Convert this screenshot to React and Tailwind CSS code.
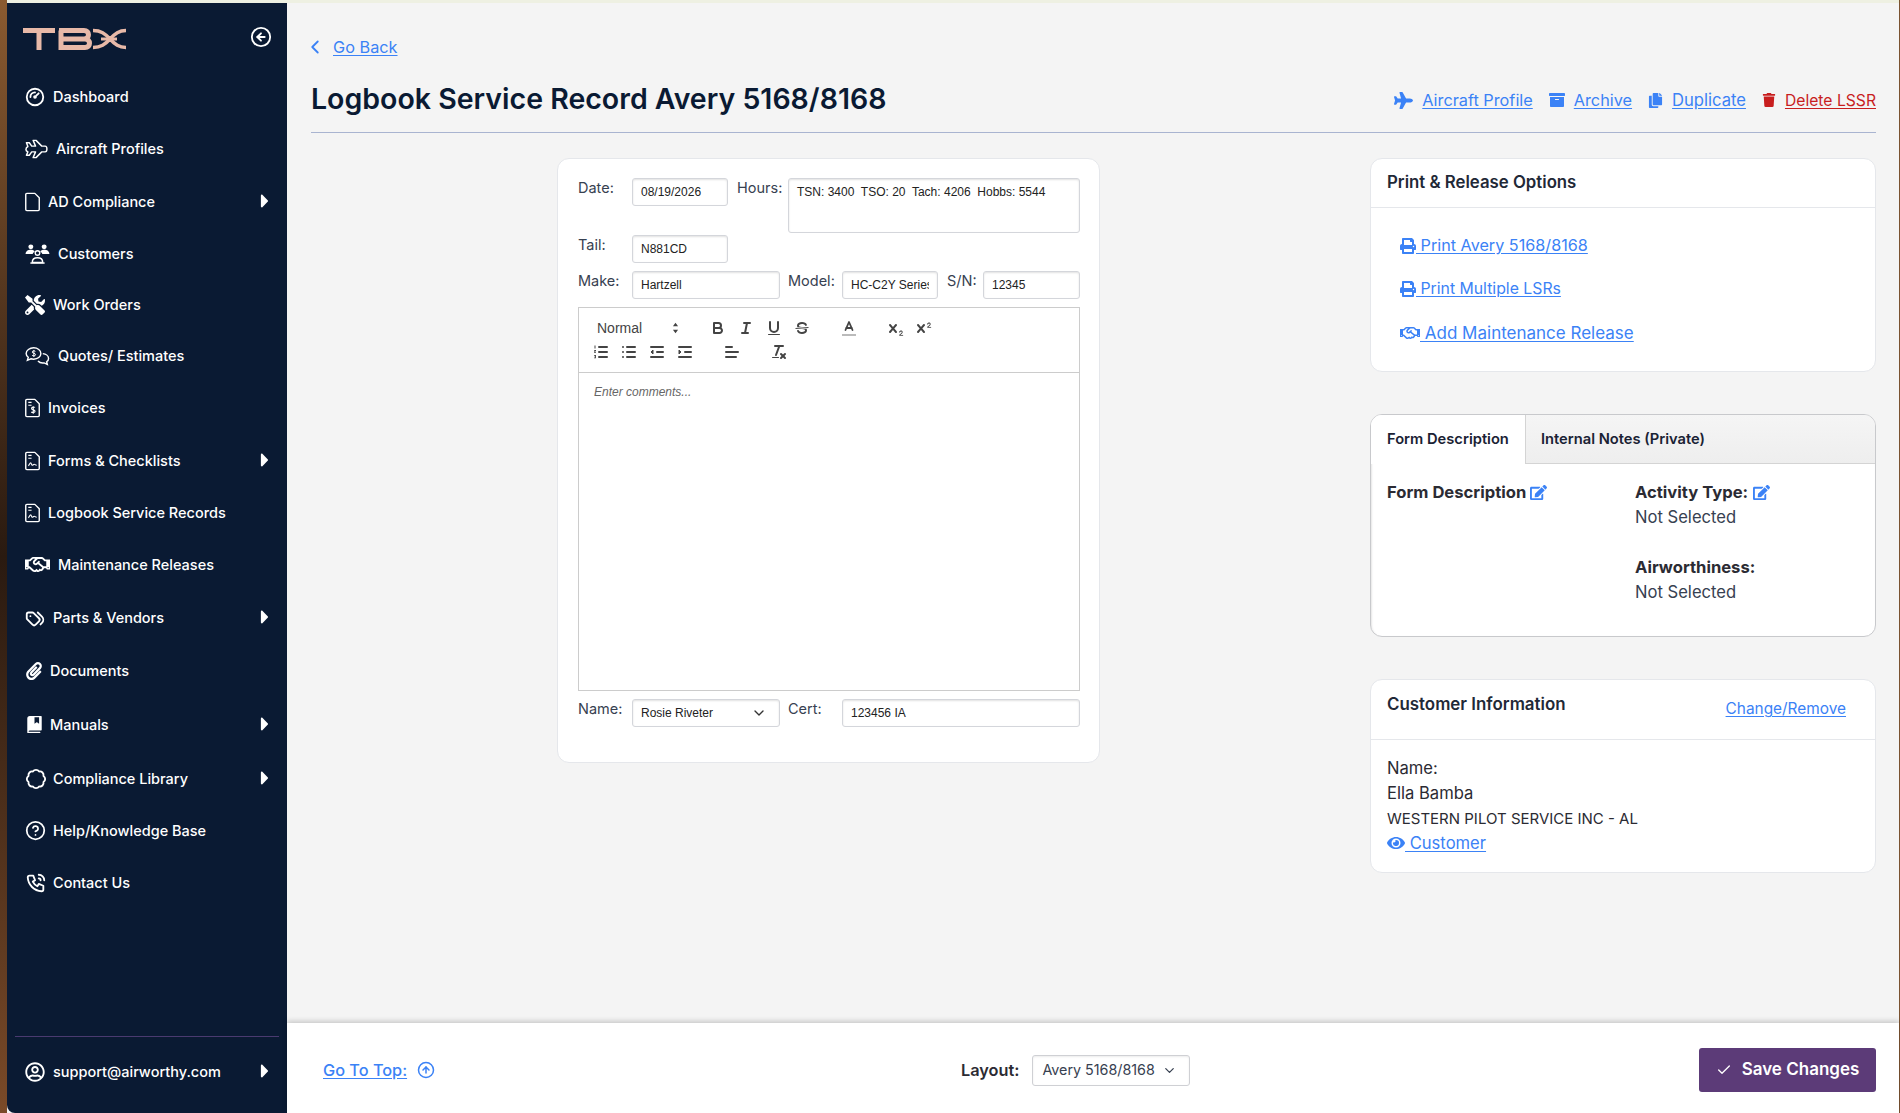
import { FaArchive, FaCaretRight, FaEye, FaPlane, FaPrint, FaRegHandshake, FaRegUserCircle, FaTools, FaTrash, FaCopy, FaEdit, FaPaperclip } from "react-icons/fa";
import { PiBookBookmarkFill } from "react-icons/pi";
import { TbGauge, TbTags, TbPhoneCall } from "react-icons/tb";
import { LuBadge, LuCheck, LuChevronDown, LuChevronLeft, LuCircleArrowLeft, LuCircleArrowUp, LuCircleHelp } from "react-icons/lu";

const poppins = "font-['Inter',sans-serif]";
const arial = "font-['Liberation_Sans',Arial,sans-serif]";

function QuotesIcon() {
  return (
    <svg viewBox="0 0 26 20" className="w-[25px] h-[20px]" fill="none" stroke="currentColor" strokeWidth="1.5">
      <path d="M9 1.5c4.2 0 7.5 2.6 7.5 5.9s-3.300 5.900-7.500 5.900c-1 0-1.900-.1-2.800-.4L2.500 14.500l.9-3.200C2 10.300 1.200 8.900 1.200 7.400 1.200 4.100 4.800 1.500 9 1.500z" />
      <path d="M18.500 7.500c3.300.4 6 2.500 6 5 0 1.400-.7 2.600-2 3.500l.7 2.700-3.200-1.500c-2.500.4-5-.2-6.500-1.900" />
      <path d="M10.800 5.200c-.4-.7-3.300-1-3.300.7 0 1.700 3.500.9 3.500 2.700 0 1.600-3 1.500-3.700.6M9.200 3.800v7.200" strokeWidth="1" />
    </svg>
  );
}

function PlaneIcon() {
  return (
    <svg viewBox="0 0 24 20" className="w-[23px] h-[20px]" fill="none" stroke="currentColor" strokeWidth="1.500" strokeLinejoin="round">
      <path d="M1.500 3.500h3l2.500 3.500h4L8.500 1h3l6 6h3.500c2.500 0 2.500 6 0 6h-3.500l-6 6h-3l2.500-6h-4l-2.500 3.500h-3l1.500-3.500-1.500-1-.5-1.500.5-2 1.500-1z" />
    </svg>
  );
}

function UsersIcon() {
  return (
    <svg viewBox="0 0 26 21" className="w-[25px] h-[20px]">
      <g fill="currentColor">
        <circle cx="6" cy="3" r="2.600" />
        <circle cx="20" cy="3" r="2.600" />
        <path d="M0.500 10.500c0-3 2.500-4.500 5.500-4.500 2 0 3.400.6 4.200 1.700-1.300 1-2 2-2.200 2.800z" />
        <path d="M25.500 10.500c0-3-2.500-4.500-5.500-4.500-2 0-3.400.6-4.200 1.700 1.300 1 2 2 2.200 2.800z" />
      </g>
      <g fill="none" stroke="currentColor" strokeWidth="1.500">
        <circle cx="13" cy="9.500" r="2.400" />
        <path d="M7.500 19.500c0-3.500 2.500-5 5.500-5s5.500 1.500 5.500 5z" />
      </g>
      <path d="M5.500 20h15" stroke="currentColor" strokeWidth="1.500" />
    </svg>
  );
}

function FileIcon({ children }) {
  return (
    <svg viewBox="0 0 16 20" className="w-[15px] h-[20px]" fill="none" stroke="currentColor" strokeWidth="1.500" strokeLinejoin="round">
      <path d="M2 .8h8.500l4.700 4.700V18a1.200 1.200 0 0 1-1.200 1.200H2A1.200 1.200 0 0 1 .8 18V2A1.200 1.200 0 0 1 2 .8z" />
      {children}
    </svg>
  );
}

function InvoiceIcon() {
  return (
    <FileIcon>
      <path d="M3.500 4h3.500M3.500 7h3.500" strokeWidth="1.200" />
      <path d="M10.500 9.500c-.5-.7-3.500-.8-3.500 1 0 1.900 3.700 1 3.700 3 0 1.800-3.300 1.600-4 .6M8.800 8v8" strokeWidth="1.200" />
    </FileIcon>
  );
}

function FormIcon() {
  return (
    <FileIcon>
      <path d="M3.500 4h3.500M3.500 7h3.500" strokeWidth="1.200" />
      <path d="M3.500 15c1-.3 1.500-3 2.500-3s.8 2.500 1.800 2.500 1-1 2-1 1 1 2.700 1" strokeWidth="1.200" />
    </FileIcon>
  );
}

function SideItem({ icon, label, pad, height, caret }) {
  return (
    <div className={`flex items-center pl-[18px] pr-[18px] text-white ${height}`}>
      <div className={`flex items-center shrink-0 ${pad}`}>{icon}</div>
      <span className="text-[14.5px] font-medium whitespace-nowrap">{label}</span>
      {caret && <FaCaretRight className="ml-auto text-[22px] -mr-[7px] -mt-[2px]" />}
    </div>
  );
}

function Sidebar() {
  return (
    <aside className={`${poppins} w-[280px] shrink-0 bg-[#0a1a33] rounded-bl-lg flex flex-col`}>
      <div className="flex items-start justify-between pl-[16px] pr-[15px] pt-[25px] h-[68px]">
        <svg viewBox="0 0 105 22" className="w-[105px] h-[22px]" fill="none" stroke="#e8b9a8" strokeWidth="5">
          <path d="M0 2.500h32M16 2.500V22" />
          <path d="M36 2.500h25c6 0 6 8.500 0 8.500H38M38 11h24c6 0 6 8.500 0 8.500H38V2.500" />
          <path d="M70 2.500c8 0 12 3 17 8.500c5-5.500 9-8.500 16-8.500M70 19.500c8 0 12-3 17-8.500c5 5.500 9 8.500 16 8.500" strokeWidth="3.500" />
          <path d="M78 11h16" strokeWidth="3" />
        </svg>
        <LuCircleArrowLeft className="text-white text-[22px] -mt-[2px]" />
      </div>
      <div className="flex flex-col">
        <SideItem height="h-[51px]" pad="w-[28px]" label="Dashboard" icon={<TbGauge className="text-[22px] -ml-[1px]" />} />
        <SideItem height="h-[53px]" pad="w-[31px]" label="Aircraft Profiles" icon={<PlaneIcon />} />
        <SideItem height="h-[53px]" pad="w-[23px]" label="AD Compliance" caret icon={<FileIcon />} />
        <SideItem height="h-[51px]" pad="w-[33px]" label="Customers" icon={<UsersIcon />} />
        <SideItem height="h-[51px]" pad="w-[28px]" label="Work Orders" icon={<FaTools className="text-[20px]" />} />
        <SideItem height="h-[51px]" pad="w-[33px]" label="Quotes/ Estimates" icon={<QuotesIcon />} />
        <SideItem height="h-[53px]" pad="w-[23px]" label="Invoices" icon={<InvoiceIcon />} />
        <SideItem height="h-[53px]" pad="w-[23px]" label="Forms & Checklists" caret icon={<FormIcon />} />
        <SideItem height="h-[51px]" pad="w-[23px]" label="Logbook Service Records" icon={<FormIcon />} />
        <SideItem height="h-[53px]" pad="w-[33px]" label="Maintenance Releases" icon={<FaRegHandshake className="text-[25px]" />} />
        <SideItem height="h-[53px]" pad="w-[28px]" label="Parts & Vendors" caret icon={<TbTags className="text-[22px] -ml-[1px]" />} />
        <SideItem height="h-[53px]" pad="w-[25px]" label="Documents" icon={<FaPaperclip className="text-[18px]" />} />
        <SideItem height="h-[55px]" pad="w-[25px]" label="Manuals" caret icon={<PiBookBookmarkFill className="text-[21px] -ml-[1px]" />} />
        <SideItem height="h-[53px]" pad="w-[28px]" label="Compliance Library" caret icon={<LuBadge className="text-[22px]" />} />
        <SideItem height="h-[51px]" pad="w-[28px]" label="Help/Knowledge Base" icon={<LuCircleHelp className="text-[21px]" />} />
        <SideItem height="h-[53px]" pad="w-[28px]" label="Contact Us" icon={<TbPhoneCall className="text-[22px]" />} />
      </div>
      <div className="mt-auto mx-[8px] border-t border-[#4a3a70] pt-[11px] pb-[18px]">
        <div className="-mx-[8px]">
          <SideItem height="h-[47px]" pad="w-[28px]" label="support@airworthy.com" caret icon={<FaRegUserCircle className="text-[20px]" />} />
        </div>
      </div>
    </aside>
  );
}

function Label({ children, className = "" }) {
  return <label className={`${poppins} text-[14.5px] text-[#374151] leading-[20px] whitespace-nowrap ${className}`}>{children}</label>;
}

function Field({ value, className = "" }) {
  return (
    <input
      readOnly
      value={value}
      className={`${arial} h-[28px] px-[8px] text-[12px] text-[#222] bg-white border border-[#d4d6db] rounded-[3px] shadow-[inset_0_1px_2px_rgba(0,0,0,0.12)] outline-none ${className}`}
    />
  );
}

const qs = { fill: "none", stroke: "#444", strokeWidth: 2, strokeLinecap: "round", strokeLinejoin: "round" };

function Qicon({ children }) {
  return (
    <button className="w-[28px] h-[24px] flex items-center justify-center shrink-0">
      <svg viewBox="0 0 18 18" className="w-[18px] h-[18px]">{children}</svg>
    </button>
  );
}

function ListLines({ x = 7 }) {
  return (
    <g {...qs}>
      <line x1={x} x2="15" y1="4" y2="4" />
      <line x1={x} x2="15" y1="9" y2="9" />
      <line x1={x} x2="15" y1="14" y2="14" />
    </g>
  );
}

function Toolbar() {
  const subX = "M9.650,5.241a1,1,0,0,0-1.409.108L6,7.964,3.759,5.349A1,1,0,0,0,2.192,6.592Q2.200,6.600,2.241,6.651L4.684,9.500,2.241,12.350A1,1,0,0,0,3.759,13.651L6,11.036l2.241,2.615a1,1,0,0,0,1.567-1.243Q9.800,12.400,9.759,12.350L7.316,9.500,9.759,6.651A1,1,0,0,0,9.650,5.241Z";
  return (
    <div className="h-[65px] border-b border-[#ccc] pl-[8px] pt-[8px] shrink-0">
      <div className="flex h-[24px] items-start">
        <div className={`${arial} w-[98px] h-[24px] flex items-center justify-between pl-[10px] pr-[6px] text-[14px] text-[#444] mr-[19px]`}>
          <span>Normal</span>
          <svg viewBox="0 0 8 14" className="w-[7px] h-[12px]" fill="#444"><path d="M4 1l3 4H1zM4 13L1 9h6z" /></svg>
        </div>
        <Qicon>
          <g {...qs}>
            <path d="M5,4H9.500A2.500,2.500,0,0,1,12,6.500v0A2.500,2.500,0,0,1,9.500,9H5V4Z" />
            <path d="M5,9h5.500A2.500,2.500,0,0,1,13,11.500v0A2.500,2.500,0,0,1,10.500,14H5V9Z" />
          </g>
        </Qicon>
        <Qicon>
          <g {...qs}>
            <line x1="7" x2="13" y1="4" y2="4" />
            <line x1="5" x2="11" y1="14" y2="14" />
            <line x1="8" x2="10" y1="14" y2="4" />
          </g>
        </Qicon>
        <Qicon>
          <path {...qs} d="M5,3V9a4,4,0,0,0,4,4H9a4,4,0,0,0,4-4V3" />
          <rect fill="#444" height="1" rx=".5" width="12" x="3" y="15" />
        </Qicon>
        <Qicon>
          <line stroke="#444" strokeWidth="1" x1="15.500" x2="2.500" y1="8.500" y2="9.500" />
          <path fill="#444" d="M9,8C6.500,7.800,6,7.500,6,6.500,6,5.800,7.300,5,9,5c1.600,0,2.800.7,3,1.300a1,1,0,0,0,1.900-.6C13.400,4.100,11.400,3,9,3,6.200,3,4,4.500,4,6.500a3.200,3.200,0,0,0,.5,1.800Z" />
          <path fill="#444" d="M9,10C11.500,10.200,12,10.500,12,11.500c0,.7-1.300,1.500-3,1.500-1.600,0-2.800-.7-3-1.300a1,1,0,1,0-1.900.6C4.600,13.900,6.600,15,9,15c2.800,0,5-1.500,5-3.500a3.200,3.200,0,0,0-.5-1.800Z" />
        </Qicon>
        <div className="w-[19px] shrink-0" />
        <Qicon>
          <g {...qs} strokeWidth="1.800">
            <polyline points="5.500 11 9 3 12.500 11" />
            <line x1="11.600" x2="6.400" y1="9" y2="9" />
          </g>
          <rect fill="#bbb" height="2" width="14" x="2" y="15" />
        </Qicon>
        <div className="w-[19px] shrink-0" />
        <Qicon>
          <path fill="#444" d={subX} />
          <path fill="#444" d="M15.500,16H13.400c.6-.6,2.300-1.500,2.300-3,0-.9-.7-1.500-1.600-1.500-.9,0-1.700.6-2,1.400a.5.5,0,1,0,1,.3c.1-.4.500-.7,1-.7.400,0,.7.200.7.500,0,1-1.300,1.800-2.200,2.500-.3.200-.5.500-.5,.8,0,.3.200.4.500.4h3.100a.5.5,0,0,0,0-1Z" />
        </Qicon>
        <Qicon>
          <path fill="#444" d={subX} />
          <path fill="#444" d="M15.500,8H13.400c.6-.6,2.300-1.500,2.300-3,0-.9-.7-1.500-1.600-1.500-.9,0-1.700.6-2,1.400a.5.5,0,1,0,1,.3c.1-.4.500-.7,1-.7.400,0,.7.200.7.500,0,1-1.300,1.800-2.200,2.500-.3.200-.5.500-.5,.8,0,.3.200.4.500.4h3.100a.5.5,0,0,0,0-1Z" />
        </Qicon>
      </div>
      <div className="flex h-[24px] items-start">
        <Qicon>
          <ListLines />
          <path fill="#444" d="M2.500 2.500h1v3h-1zM2 7h2v.8l-1 1.200h1v.8H2V9l1-1.200H2zM2 12h2v3.200H2v-.7h1.200v-.5H2.500v-.6h.7v-.6H2z" />
        </Qicon>
        <Qicon>
          <ListLines />
          <g {...qs}>
            <line x1="3" x2="3" y1="4" y2="4" />
            <line x1="3" x2="3" y1="9" y2="9" />
            <line x1="3" x2="3" y1="14" y2="14" />
          </g>
        </Qicon>
        <Qicon>
          <g {...qs}>
            <line x1="3" x2="15" y1="14" y2="14" />
            <line x1="3" x2="15" y1="4" y2="4" />
            <line x1="9" x2="15" y1="9" y2="9" />
          </g>
          <polyline fill="#444" stroke="#444" points="5 7 5 11 3 9 5 7" />
        </Qicon>
        <Qicon>
          <g {...qs}>
            <line x1="3" x2="15" y1="14" y2="14" />
            <line x1="3" x2="15" y1="4" y2="4" />
            <line x1="9" x2="15" y1="9" y2="9" />
          </g>
          <polyline fill="#444" stroke="#444" points="3 7 3 11 5 9 3 7" />
        </Qicon>
        <div className="w-[19px] shrink-0" />
        <Qicon>
          <g {...qs}>
            <line x1="3" x2="15" y1="9" y2="9" />
            <line x1="3" x2="13" y1="14" y2="14" />
            <line x1="3" x2="9" y1="4" y2="4" />
          </g>
        </Qicon>
        <div className="w-[19px] shrink-0" />
        <Qicon>
          <g {...qs}>
            <line x1="5" x2="13" y1="3" y2="3" />
            <line x1="6" x2="9.350" y1="12" y2="3" />
            <line x1="11" x2="15" y1="11" y2="15" />
            <line x1="15" x2="11" y1="11" y2="15" />
          </g>
          <rect fill="#444" height="1" rx=".5" width="7" x="2" y="14" />
        </Qicon>
      </div>
    </div>
  );
}

function FormCard() {
  return (
    <div className="w-[543px] ml-[246px] h-[605px] bg-white rounded-xl border border-[#e5e7eb] pl-[20px] pr-[19px] pt-[19px]">
      <div className="flex">
        <Label className="w-[54px]">Date:</Label>
        <Field value="08/19/2026" className="w-[96px]" />
        <Label className="w-[51px] ml-[9px]">Hours:</Label>
        <textarea readOnly value="TSN: 3400  TSO: 20  Tach: 4206  Hobbs: 5544" className={`${arial} w-[292px] h-[55px] px-[8px] py-[4px] text-[12px] text-[#222] bg-white border border-[#d4d6db] rounded-[3px] shadow-[inset_0_1px_2px_rgba(0,0,0,0.12)] outline-none resize-none`} />
      </div>
      <div className="flex mt-[2px]">
        <Label className="w-[54px]">Tail:</Label>
        <Field value="N881CD" className="w-[96px]" />
      </div>
      <div className="flex mt-[8px]">
        <Label className="w-[54px]">Make:</Label>
        <Field value="Hartzell" className="w-[148px]" />
        <Label className="w-[54px] ml-[8px]">Model:</Label>
        <Field value="HC-C2Y Series" className="w-[96px]" />
        <Label className="w-[36px] ml-[9px]">S/N:</Label>
        <Field value="12345" className="w-[97px]" />
      </div>
      <div className="mt-[8px] h-[384px] border border-[#ccc] flex flex-col">
        <Toolbar />
        <div className={`${arial} px-[15px] py-[10px] text-[12px] leading-[18px] italic text-[#666]`}>Enter comments...</div>
      </div>
      <div className="flex mt-[8px]">
        <Label className="w-[54px]">Name:</Label>
        <div className="relative w-[148px]">
          <select className={`${arial} w-full h-[28px] pl-[8px] pr-[24px] text-[12px] text-[#222] bg-white border border-[#d4d6db] rounded-[3px] shadow-[inset_0_1px_2px_rgba(0,0,0,0.12)] outline-none appearance-none`}>
            <option>Rosie Riveter</option>
          </select>
          <LuChevronDown className="absolute right-[13px] top-[6px] text-[16px] text-[#333] pointer-events-none" />
        </div>
        <Label className="w-[54px] ml-[8px]">Cert:</Label>
        <Field value="123456 IA" className="w-[238px]" />
      </div>
    </div>
  );
}

function TextLink({ icon, children, className = "" }) {
  return (
    <a className={`flex items-center gap-[9px] ${className}`}>
      {icon}
      <span className="underline underline-offset-2 whitespace-nowrap">{children}</span>
    </a>
  );
}

function PrintOptions() {
  const link = "block text-[#3b82f6] underline underline-offset-2 whitespace-nowrap leading-[24px]";
  return (
    <div className="bg-white rounded-xl border border-[#e5e7eb] h-[214px]">
      <div className="h-[49px] border-b border-[#e5e7eb] pl-[16px] flex items-center text-[16.8px] font-semibold text-[#1f2937]">Print & Release Options</div>
      <div className="pl-[29px] pt-[25px] flex flex-col gap-[20px]">
        <a className={`${link} text-[16.2px]`}><FaPrint className="inline text-[16px] -mt-[2px]" /> Print Avery 5168/8168</a>
        <a className={`${link} text-[15.8px]`}><FaPrint className="inline text-[16px] -mt-[2px]" /> Print Multiple LSRs</a>
        <a className={`${link} text-[17px]`}><FaRegHandshake className="inline text-[20px] -mt-[2px]" /> Add Maintenance Release</a>
      </div>
    </div>
  );
}

function TabsCard() {
  return (
    <div className="mt-[42px] bg-white rounded-xl border border-[#c8c9cc] shadow-[inset_1px_1px_2px_rgba(0,0,0,0.1)] h-[223px] overflow-hidden">
      <div className="flex h-[49px] bg-gradient-to-b from-[#f5f5f5] to-[#eeeeee] border-b border-[#d4d4d4] text-[14.7px] font-semibold text-[#1a2234]">
        <div className="w-[155px] h-[49px] bg-white border-r border-[#d4d4d4] pl-[16px] flex items-center">Form Description</div>
        <div className="pl-[15px] flex items-center">Internal Notes (Private)</div>
      </div>
      <div className="flex pl-[16px] pt-[16px] text-[16.6px] text-[#374151] leading-[25px]">
        <div className="w-[248px] font-bold text-[#2b2b33] flex items-center h-[25px]">Form Description<FaEdit className="ml-[4px] text-[#3b82f6] text-[17px]" /></div>
        <div>
          <div className="font-bold text-[#2b2b33] flex items-center">Activity Type:<FaEdit className="ml-[5px] text-[#3b82f6] text-[17px]" /></div>
          <div>Not Selected</div>
          <div className="font-bold text-[#2b2b33] mt-[25px]">Airworthiness:</div>
          <div>Not Selected</div>
        </div>
      </div>
    </div>
  );
}

function CustomerCard() {
  return (
    <div className="mt-[42px] bg-white rounded-xl border border-[#e5e7eb] h-[194px]">
      <div className="h-[60px] border-b border-[#e5e7eb] pl-[16px] pr-[29px] flex justify-between">
        <span className="text-[16.9px] font-semibold text-[#1f2937] pt-[12px] leading-[24px]">Customer Information</span>
        <a className="text-[15.4px] text-[#3b82f6] underline underline-offset-2 pt-[17px] leading-[24px]">Change/Remove</a>
      </div>
      <div className="pl-[16px] pt-[16px] text-[16.6px] text-[#2b2b33] leading-[25px]">
        <div>Name:</div>
        <div>Ella Bamba</div>
        <div className="text-[15px]">WESTERN PILOT SERVICE INC - AL</div>
        <a className="text-[#3b82f6] underline underline-offset-2"><FaEye className="inline text-[18px] -mt-[2px]" /> Customer</a>
      </div>
    </div>
  );
}

export default function App() {
  return (
    <div className={`${poppins} flex h-[1113px] w-[1900px] overflow-hidden bg-[#f4f4f4]`}>
      <div className="w-[7px] shrink-0 bg-gradient-to-b from-[#8a5a30] via-[#2a1a10] to-[#7a4a28]" />
      <div className="flex-1 flex flex-col min-w-0">
        <div className="h-[3px] bg-[#eef0e2] shrink-0" />
        <div className="flex-1 flex min-h-0">
          <Sidebar />
          <main className="flex-1 flex flex-col min-w-0">
            <div className="flex-1 pl-[24px] pr-[23px] pt-[32px]">
              <div className="flex items-center h-[24px] text-[16.3px] text-[#3b82f6]">
                <LuChevronLeft className="text-[22px] -ml-[7px] mr-[7px]" />
                <a className="underline underline-offset-2">Go Back</a>
              </div>
              <div className="flex items-center justify-between mt-[16px] h-[48px]">
                <h1 className="text-[28.5px] font-semibold text-[#0a1a33] whitespace-nowrap">Logbook Service Record Avery 5168/8168</h1>
                <div className="flex items-center text-[16.3px] text-[#3b82f6] gap-[16px] pt-[3px]">
                  <TextLink icon={<FaPlane className="text-[19px]" />}>Aircraft Profile</TextLink>
                  <TextLink icon={<FaArchive className="text-[16px]" />}>Archive</TextLink>
                  <TextLink className="text-[16.6px]" icon={<FaCopy className="text-[15px]" />}>Duplicate</TextLink>
                  <TextLink className="text-[#c81e1e] text-[15.7px]" icon={<FaTrash className="text-[14px]" />}>Delete LSSR</TextLink>
                </div>
              </div>
              <div className="h-[10px] border-b border-[#a9b4d0]" />
              <div className="flex mt-[25px]">
                <FormCard />
                <div className="w-[506px] ml-auto">
                  <PrintOptions />
                  <TabsCard />
                  <CustomerCard />
                </div>
              </div>
            </div>
            <footer className="h-[90px] shrink-0 bg-white shadow-[0_-2px_5px_rgba(0,0,0,0.18)] relative flex items-center pl-[36px] pr-[23px] pt-[4px]">
              <a className="flex items-center text-[16.3px] text-[#3b82f6] w-[390px] font-medium">
                <span className="underline underline-offset-2">Go To Top:</span>
                <LuCircleArrowUp className="text-[18px] ml-[10px]" />
              </a>
              <div className="ml-[248px] flex items-center gap-[13px]">
                <span className="text-[16.3px] font-semibold text-[#2b2b33]">Layout:</span>
                <div className="w-[158px] h-[31px] border border-[#cfd0d4] rounded-[3px] shadow-[inset_0_1px_2px_rgba(0,0,0,0.08)] flex items-center pl-[9px] text-[14.3px] text-[#374151]">
                  Avery 5168/8168 <LuChevronDown className="ml-[7px] text-[15px]" />
                </div>
              </div>
              <button className="ml-auto w-[177px] h-[44px] bg-[#5c3b78] rounded-[3px] text-white text-[17px] font-semibold flex items-center justify-center gap-[10px]">
                <LuCheck className="text-[16px]" />Save Changes
              </button>
            </footer>
          </main>
        </div>
      </div>
      <div className="w-[1px] shrink-0 bg-[#7a5230]" />
    </div>
  );
}
